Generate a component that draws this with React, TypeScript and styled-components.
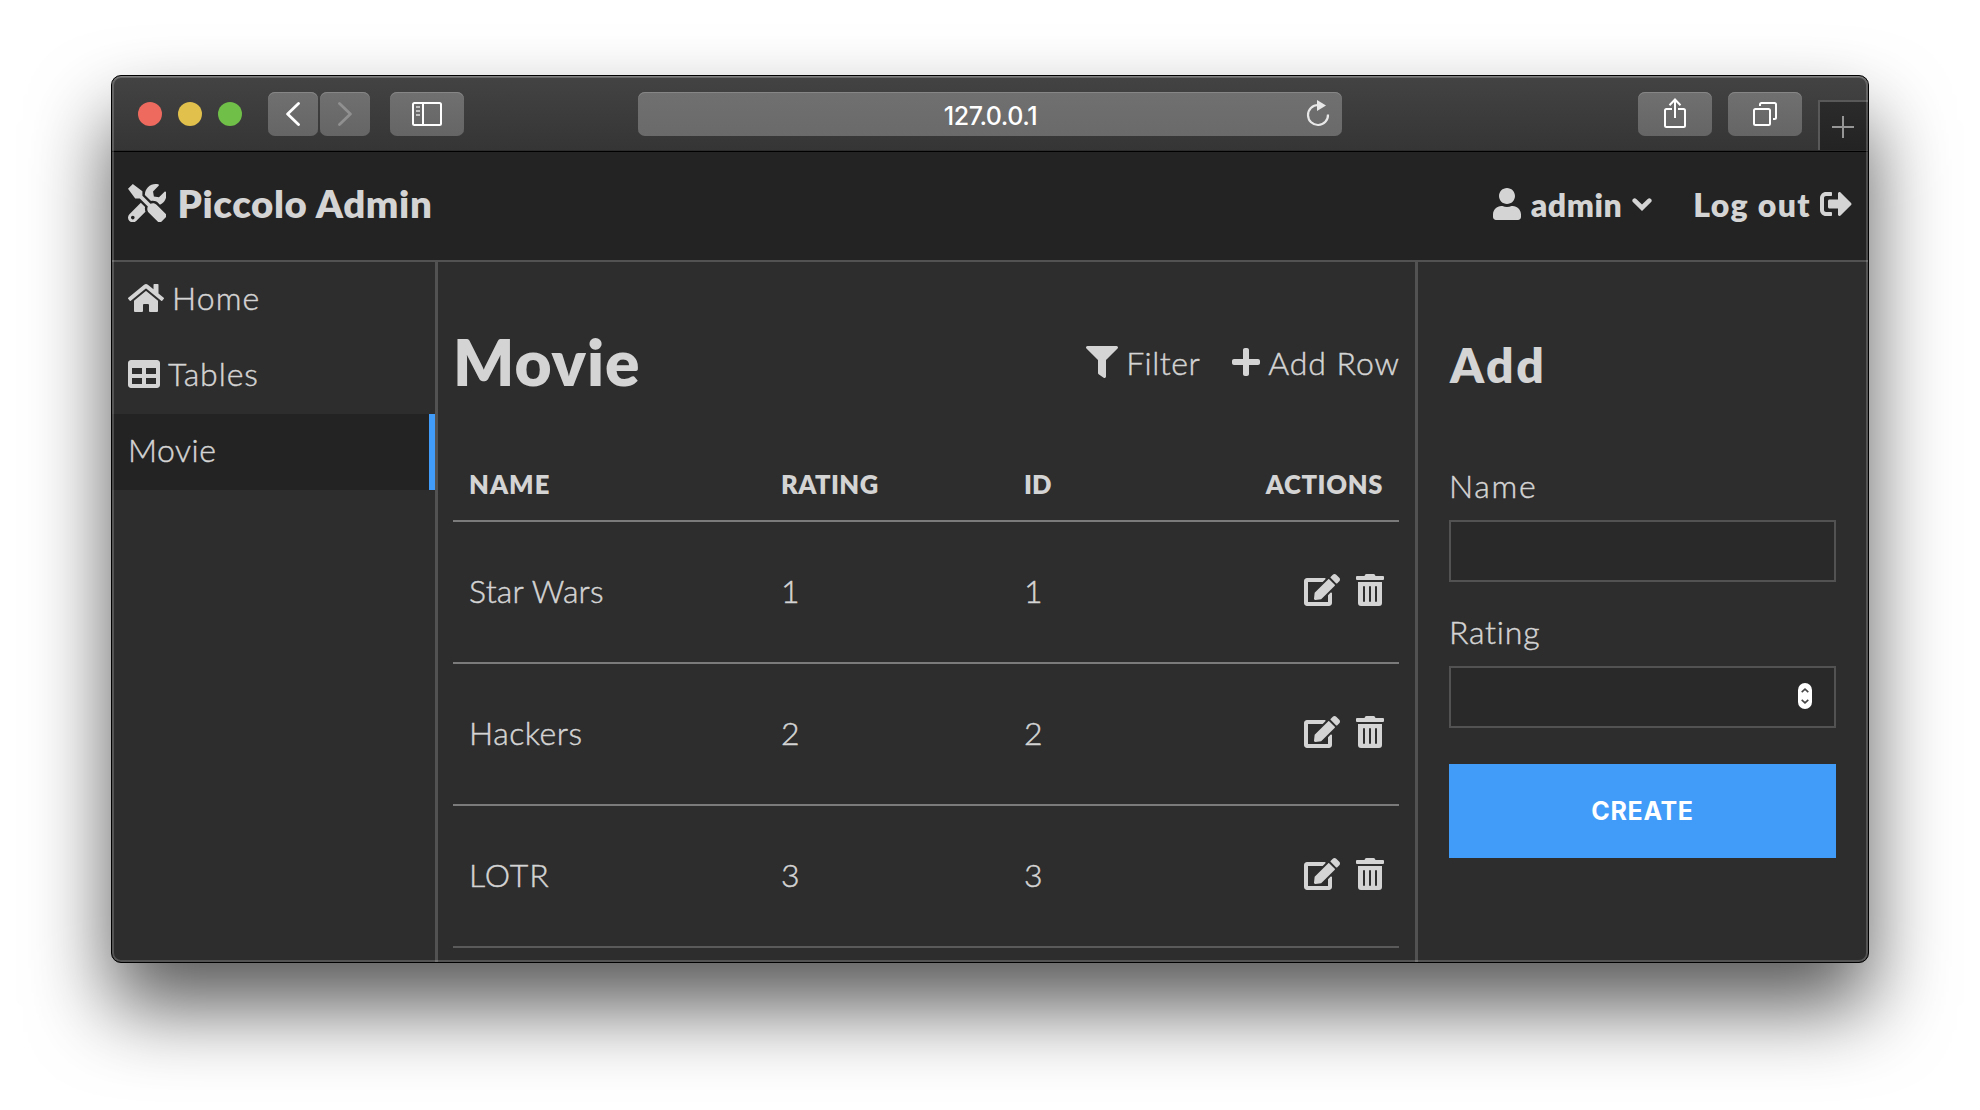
import React from "react";
import styled, { createGlobalStyle, css } from "styled-components";
import {
  FaTools,
  FaHome,
  FaTable,
  FaUser,
  FaSignOutAlt,
  FaFilter,
  FaPlus,
  FaEdit,
  FaTrashAlt,
} from "react-icons/fa";

const color = {
  text: "#d4d4d4",
  page: "#2d2d2d",
  dark: "#232323",
  border: "#525252",
  rowLine: "#7b7b7b",
  blue: "#419bf9",
};

const GlobalStyle = createGlobalStyle`
  *, *::before, *::after { box-sizing: border-box; }
  body {
    margin: 0;
    background: #fff;
    color: ${color.text};
    font-family: Lato, "Open Sans", sans-serif;
    font-weight: 300;
    font-size: 32px;
    overflow: hidden;
  }
  svg { display: block; flex: none; }
`;

const Desktop = styled.div`
  height: 1110px;
  padding: 75px 111px 147px;
`;

const Window = styled.div`
  position: relative;
  display: flex;
  flex-direction: column;
  height: 888px;
  border: 1px solid #000;
  border-radius: 10px;
  overflow: hidden;
  background: ${color.page};
  box-shadow: 0 44px 80px rgba(0, 0, 0, 0.65);

  &::after {
    content: "";
    position: absolute;
    inset: 0;
    border-radius: 9px;
    box-shadow: inset 0 0 0 2px rgba(255, 255, 255, 0.19), inset 0 1px 0 rgba(255, 255, 255, 0.18);
    pointer-events: none;
  }
`;

/* ---------- browser chrome ---------- */

const Toolbar = styled.div`
  display: flex;
  align-items: flex-start;
  flex: none;
  height: 76px;
  padding: 16px 0 0 26px;
  background: linear-gradient(#434343, #353535);
  border-bottom: 1px solid #000;
  box-shadow: inset 0 -1px 0 #2c2c2c;
`;

const Lights = styled.div`
  display: flex;
  align-items: center;
  gap: 16px;
  height: 44px;
  margin-right: 26px;
`;

const Light = styled.span<{ $fill: string }>`
  width: 24px;
  height: 24px;
  border-radius: 50%;
  background: ${(p) => p.$fill};
`;

const raised = css`
  display: flex;
  align-items: center;
  justify-content: center;
  height: 44px;
  border-radius: 7px;
  background: linear-gradient(#707070, #656565);
  box-shadow: inset 0 1px 0 #868686;
`;

const ToolGroup = styled.div<{ $gap: number }>`
  display: flex;
  gap: ${(p) => p.$gap}px;
`;

const ToolButton = styled.button<{ $wide?: boolean }>`
  ${raised}
  width: ${(p) => (p.$wide ? 74 : 50)}px;
  padding: 0;
  border: 0;
`;

const AddressBar = styled.div`
  ${raised}
  position: relative;
  width: 704px;
  margin: 0 296px 0 174px;
  padding: 3px 0 0 1px;
  background: linear-gradient(#707070, #6a6a6a);
  color: #fff;
  font: 500 25px Inter, sans-serif;
  letter-spacing: -0.45px;
`;

const Reload = styled.span`
  position: absolute;
  top: 8px;
  right: 12px;
`;

const SidebarGap = styled.div`
  margin-left: 20px;
`;

const NewTab = styled.div`
  display: flex;
  align-items: center;
  justify-content: center;
  flex: 1;
  height: 50px;
  margin: 8px 0 0 16px;
  padding: 2px 2px 0 0;
  border-left: 2px solid #595959;
  border-top: 2px solid #595959;
  background: linear-gradient(#2b2b2b, #232323);
`;

/* ---------- admin page ---------- */

const Label = styled.span<{ $track?: number }>`
  letter-spacing: ${(p) => p.$track ?? 0}px;
  white-space: nowrap;
`;

/* Thickens the light weight a little. */
const light = css`
  -webkit-text-stroke: 0.45px ${color.text};
`;

const Header = styled.header`
  display: flex;
  justify-content: space-between;
  flex: none;
  height: 110px;
  padding: 0 16px 4px;
  border-bottom: 2px solid ${color.border};
  background: ${color.dark};
  font-weight: 800;
`;

const Brand = styled.div`
  display: flex;
  align-items: center;
  gap: 11px;
  padding-bottom: 2px;
  font-size: 38.4px;
`;

const Account = styled.nav`
  display: flex;
  gap: 41px;
`;

const AccountLink = styled.a<{ $gap: number }>`
  display: flex;
  align-items: center;
  gap: ${(p) => p.$gap}px;
`;

const Columns = styled.div`
  display: flex;
  flex: 1;
  min-height: 0;
`;

const Sidebar = styled.aside`
  width: 326px;
  border-right: 3px solid ${color.border};
`;

const NavItem = styled.a<{ $active?: boolean }>`
  ${light}
  display: flex;
  align-items: center;
  gap: 8px;
  height: 76px;
  padding: 0 0 4px 16px;
  ${Label} {
    padding-bottom: 2px;
  }
  ${(p) =>
    p.$active &&
    css`
      background: ${color.dark};
      border-right: 6px solid ${color.blue};
    `}
`;

const Main = styled.main`
  flex: 1;
  padding: 0 16px 0 15px;
`;

const MainHead = styled.div`
  display: flex;
  align-items: center;
  justify-content: space-between;
  height: 200px;
`;

const Title = styled.h1`
  margin: 0;
  padding-bottom: 1px;
  font-size: 64px;
  font-weight: 800;
  line-height: 77px;
  letter-spacing: 1px;
`;

const Actions = styled.div`
  ${light}
  display: flex;
  gap: 32px;
  margin-right: -1px;
`;

const Action = styled.a`
  display: flex;
  align-items: center;
  gap: 8px;
`;

const Row = styled.div<{ $last?: boolean }>`
  ${light}
  display: grid;
  grid-template-columns: 312px 243px 1fr auto;
  align-items: center;
  height: 142px;
  padding: 0 15px 3px 16px;
  border-bottom: 2px solid ${(p) => (p.$last ? "#5a5a5a" : color.rowLine)};
`;

const HeadRow = styled(Row)`
  height: 60px;
  padding-right: 16px;
  padding-bottom: 14px;
  font-size: 25.6px;
  font-weight: 800;
  -webkit-text-stroke: 0;
`;

const RowActions = styled.div`
  display: flex;
  gap: 16px;
  padding-bottom: 2px;
`;

const Panel = styled.aside`
  display: flex;
  flex-direction: column;
  width: 453px;
  padding: 0 32px 0 31px;
  border-left: 3px solid ${color.border};
`;

const PanelTitle = styled.h2`
  display: flex;
  align-items: center;
  height: 203px;
  margin: 0;
  padding: 1px 0 0 1px;
  font-size: 48px;
  font-weight: 800;
  letter-spacing: 2.5px;
`;

const Field = styled.label`
  display: block;
  & + & {
    margin-top: 29px;
  }
`;

const FieldName = styled.span<{ $track: number }>`
  ${light}
  display: flex;
  align-items: center;
  height: 55px;
  padding-bottom: 14px;
  letter-spacing: ${(p) => p.$track}px;
`;

const Input = styled.span`
  display: flex;
  align-items: center;
  justify-content: flex-end;
  height: 62px;
  padding: 0 22px 2px 0;
  border: 2px solid ${color.border};
  background: #292929;
`;

const Stepper = styled.span`
  display: flex;
  align-items: center;
  justify-content: center;
  width: 14px;
  height: 26px;
  border-radius: 7px;
  background: #fff;
`;

const Create = styled.button`
  height: 94px;
  margin-top: 36px;
  padding: 0;
  border: 0;
  background: ${color.blue};
  color: #fff;
  font: 650 25px Inter, sans-serif;
  letter-spacing: 0.65px;
`;

const Arrow = ({ flip, stroke }: { flip?: boolean; stroke: string }) => (
  <svg width="14" height="24" viewBox="0 0 14 24" fill="none" stroke={stroke} strokeWidth="2.8" strokeLinecap="round" strokeLinejoin="round">
    <path d={flip ? "M1.5 1.5L12.4 12L1.5 22.5" : "M12.5 1.5L1.6 12L12.5 22.5"} />
  </svg>
);

const SidebarIcon = () => (
  <svg width="30" height="24" viewBox="0 0 30 24" fill="none" stroke="#fff" strokeWidth="2">
    <rect x="1" y="1" width="28" height="22" rx="1.5" />
    <path d="M11 1V23" />
    <path d="M4 5H8M4 9H8M4 13H8" stroke="#c0c0c0" />
  </svg>
);

const ShareIcon = () => (
  <svg width="22" height="32" viewBox="0 0 22 32" fill="none" stroke="#fff" strokeWidth="2">
    <path d="M8 11H2.500Q1 11 1 12.500V27.500Q1 29 2.500 29H19.500Q21 29 21 27.500V12.500Q21 11 19.500 11H14" />
    <path d="M11 1.500V20M5.500 7.200L11 1.500L16.500 7.200" />
  </svg>
);

const TabsIcon = () => (
  <svg width="24" height="24" viewBox="0 0 24 24" fill="none" stroke="#fff" strokeWidth="2">
    <rect x="1" y="7" width="16" height="16" rx="1.5" />
    <path d="M7 4V2.500Q7 1 8.500 1H21.500Q23 1 23 2.500V15.500Q23 17 21.500 17H20" />
  </svg>
);

const ReloadIcon = () => (
  <svg width="24" height="28" viewBox="0 0 24 28">
    <path d="M22 14.500A10 10 0 1 1 12 5" fill="none" stroke="#e8e8e8" strokeWidth="2.200" />
    <path d="M11 0L20 5.500L11 11Z" fill="#e8e8e8" />
  </svg>
);

const CaretIcon = () => (
  <svg viewBox="0 0 20 13" fill="none" stroke="currentColor" strokeWidth="4.600" strokeLinecap="round" strokeLinejoin="miter">
    <path d="M2.700 2.700L10 9.700L17.300 2.700" />
  </svg>
);

const NAV = [
  { name: "Home", icon: <FaHome />, width: 36, track: 1.1 },
  { name: "Tables", icon: <FaTable />, width: 32, track: 0.95 },
  { name: "Movie", track: 0.5, active: true },
];

const MOVIES = [
  { name: "Star Wars", rating: 1, id: 1, track: 0.25 },
  { name: "Hackers", rating: 2, id: 2, track: 0.55 },
  { name: "LOTR", rating: 3, id: 3, track: 1 },
];

/* Font Awesome glyphs keep their own width at a fixed height. */
const Glyph = styled.span<{ $w: number; $h?: number }>`
  display: flex;
  flex: none;
  svg {
    width: ${(p) => p.$w}px;
    height: ${(p) => p.$h ?? 32}px;
  }
`;

export default function App() {
  return (
    <>
      <GlobalStyle />
      <Desktop>
        <Window>
          <Toolbar>
            <Lights>
              <Light $fill="#ee6a5f" />
              <Light $fill="#e1c04c" />
              <Light $fill="#6fbf48" />
            </Lights>
            <ToolGroup $gap={2}>
              <ToolButton><Arrow stroke="#fff" /></ToolButton>
              <ToolButton><Arrow flip stroke="#909090" /></ToolButton>
            </ToolGroup>
            <SidebarGap>
              <ToolButton $wide><SidebarIcon /></ToolButton>
            </SidebarGap>
            <AddressBar>
              127.0.0.1
              <Reload><ReloadIcon /></Reload>
            </AddressBar>
            <ToolGroup $gap={16}>
              <ToolButton $wide><ShareIcon /></ToolButton>
              <ToolButton $wide><TabsIcon /></ToolButton>
            </ToolGroup>
            <NewTab>
              <svg width="22" height="22" viewBox="0 0 22 22" stroke="#969696" strokeWidth="2">
                <path d="M11 0V22M0 11H22" />
              </svg>
            </NewTab>
          </Toolbar>

          <Header>
            <Brand>
              <Glyph $w={38.4} $h={38.4}><FaTools /></Glyph>
              <Label $track={0.6}>Piccolo Admin</Label>
            </Brand>
            <Account>
              <AccountLink $gap={10}>
                <Glyph $w={28}><FaUser /></Glyph>
                <Label $track={0.5}>admin</Label>
                <Glyph $w={20} $h={13}><CaretIcon /></Glyph>
              </AccountLink>
              <AccountLink $gap={9}>
                <Label $track={1.35}>Log out</Label>
                <Glyph $w={32}><FaSignOutAlt /></Glyph>
              </AccountLink>
            </Account>
          </Header>

          <Columns>
            <Sidebar>
              {NAV.map((item) => (
                <NavItem key={item.name} $active={item.active}>
                  {item.icon && <Glyph $w={item.width}>{item.icon}</Glyph>}
                  <Label $track={item.track}>{item.name}</Label>
                </NavItem>
              ))}
            </Sidebar>

            <Main>
              <MainHead>
                <Title>Movie</Title>
                <Actions>
                  <Action>
                    <Glyph $w={32}><FaFilter /></Glyph>
                    <Label $track={0.5}>Filter</Label>
                  </Action>
                  <Action>
                    <Glyph $w={28}><FaPlus /></Glyph>
                    <Label $track={0.95}>Add Row</Label>
                  </Action>
                </Actions>
              </MainHead>
              <HeadRow>
                <Label $track={1}>NAME</Label>
                <Label $track={0.4}>RATING</Label>
                <Label>ID</Label>
                <Label $track={0.63}>ACTIONS</Label>
              </HeadRow>
              {MOVIES.map((m, i) => (
                <Row key={m.id} $last={i === MOVIES.length - 1}>
                  <Label $track={m.track}>{m.name}</Label>
                  <Label>{m.rating}</Label>
                  <Label>{m.id}</Label>
                  <RowActions>
                    <Glyph $w={36}><FaEdit /></Glyph>
                    <Glyph $w={28}><FaTrashAlt /></Glyph>
                  </RowActions>
                </Row>
              ))}
            </Main>

            <Panel>
              <PanelTitle>Add</PanelTitle>
              <Field>
                <FieldName $track={1.7}>Name</FieldName>
                <Input />
              </Field>
              <Field>
                <FieldName $track={0.8}>Rating</FieldName>
                <Input>
                  <Stepper>
                    <svg width="8" height="16" viewBox="0 0 8 16" fill="none" stroke="#444" strokeWidth="1.600">
                      <path d="M0.700 4.200L4 1.200L7.300 4.200M0.700 11.800L4 14.800L7.300 11.800" />
                    </svg>
                  </Stepper>
                </Input>
              </Field>
              <Create>CREATE</Create>
            </Panel>
          </Columns>
        </Window>
      </Desktop>
    </>
  );
}
